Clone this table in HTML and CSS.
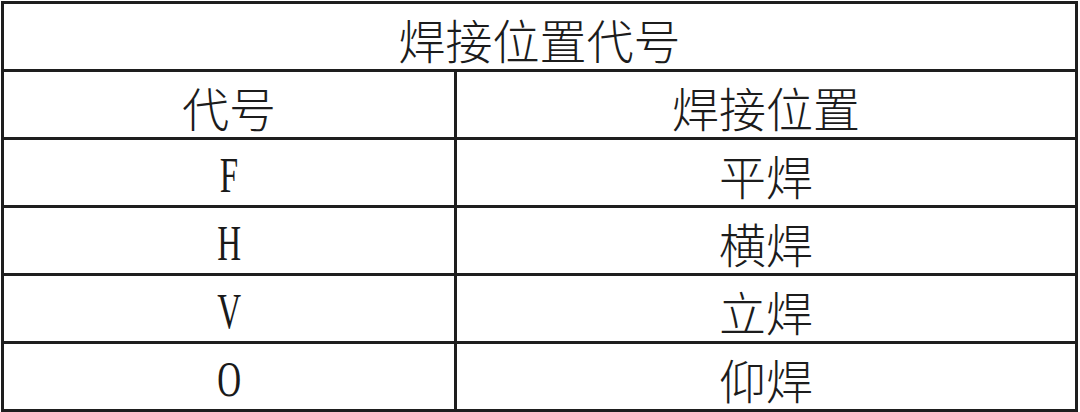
FILE: index.html
```html
<!DOCTYPE html>
<html lang="zh-CN">
<head>
<meta charset="utf-8">
<title>焊接位置代号</title>
<link rel="stylesheet" href="styles.css">
</head>
<body>
<table class="codes">
  <colgroup><col class="col-code"><col class="col-pos"></colgroup>
  <tr class="title-row"><th colspan="2">焊接位置代号</th></tr>
  <tr class="head-row"><th>代号</th><th>焊接位置</th></tr>
  <tr><td class="code"><span class="latin">F</span></td><td>平焊</td></tr>
  <tr><td class="code"><span class="latin">H</span></td><td>横焊</td></tr>
  <tr><td class="code"><span class="latin">V</span></td><td>立焊</td></tr>
  <tr><td class="code"><span class="latin">O</span></td><td>仰焊</td></tr>
</table>
</body>
</html>
```

FILE: styles.css
```css
html, body {
  margin: 0;
  padding: 0;
  background: #ffffff;
}

body {
  padding: 1px 0 0 1px;
  font-family: "Noto Sans CJK SC", "Liberation Serif", serif;
  color: #1c1c1c;
}

.codes {
  border-collapse: collapse;
  width: 1077px;
  table-layout: fixed;
}

.col-code {
  width: 453px;
}

.codes th,
.codes td {
  border: 3px solid #1e1e1e;
  height: 61px;
  padding: 4px 0 0 0;
  text-align: center;
  vertical-align: middle;
  font-size: 47px;
  font-weight: 300;
  line-height: 1;
}

.codes td.code {
  padding-top: 2px;
  height: 63px;
}

.latin {
  display: inline-block;
  font-family: "Liberation Serif", serif;
  font-size: 50px;
  font-weight: 400;
  transform: scaleX(0.66);
  color: #1a1a1a;
}
```
